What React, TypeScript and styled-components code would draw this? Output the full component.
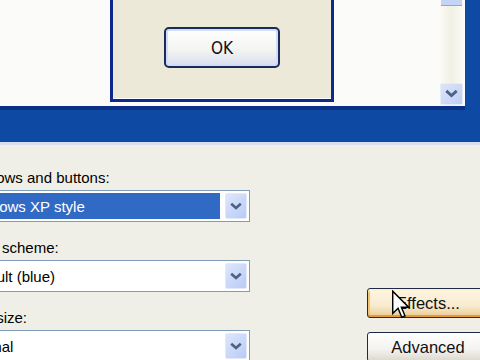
import React from 'react'
import styled, { createGlobalStyle, css } from 'styled-components'

const GlobalStyle = createGlobalStyle`
	html, body {
		margin: 0;
		padding: 0;
		background: #F0EFE7;
	}
`

const StyledPage = styled('div')`
	position: relative;
	display: flex;
	flex-direction: column;
	width: 480px;
	height: 360px;
	overflow: hidden;
	background: #F0EFE7;
	font-family: "Liberation Sans", Arial, sans-serif;
	color: #000;
`

// blue window frame around the preview
const StyledPreviewFrame = styled('div')`
	box-sizing: border-box;
	height: 145px;
	padding: 0 15px 0 0;
	background: #0E49A3;
	border-bottom: 3px solid #D7E0EE;
	flex-shrink: 0;
`

const StyledPreview = styled('div')`
	box-sizing: border-box;
	display: flex;
	height: 110px;
	padding: 0 2px 0 110px;
	background: #FBFBFA;
	border-bottom: 4px solid #0A2F86;
`

const StyledMessageBox = styled('div')`
	box-sizing: border-box;
	display: flex;
	justify-content: center;
	align-items: flex-start;
	width: 224px;
	height: 105px;
	margin-top: -3px;
	margin-right: auto;
	padding-top: 27px;
	background: #ECE9D8;
	border: 3px solid #0B2A8C;
	box-shadow: inset 0 -1px 0 #FFFFFF;
`

const StyledOkButton = styled('button')`
	box-sizing: border-box;
	width: 116px;
	height: 41px;
	border: 2px solid #1C2A5A;
	border-radius: 5px;
	background: linear-gradient(#FFFFFF 0%, #F4F4F1 55%, #D9DEF0 100%);
	box-shadow: inset 0 0 0 2px #D2DDF8;
	font-family: "DejaVu Sans Condensed", "Liberation Sans", sans-serif;
	font-size: 17px;
	color: #111;
	padding: 0;
`

const StyledScrollbar = styled('div')`
	display: flex;
	flex-direction: column;
	width: 23px;
	padding-bottom: 1px;
	background: linear-gradient(to right, #FBFAF6, #F1F0E4 50%, #FBFAF6);
`

const StyledThumb = styled('div')`
	height: 5px;
	background: #C5D4F6;
	border-bottom: 1px solid #8FA6D6;
	margin: 0 1px auto 1px;
`

const StyledScrollButton = styled('div')`
	box-sizing: border-box;
	display: flex;
	align-items: center;
	justify-content: center;
	height: 22px;
	border: 1px solid #E6ECFA;
	border-radius: 2px;
	background: linear-gradient(135deg, #DCE5FA, #BFCEF3);
`

const StyledPanel = styled('div')`
	display: flex;
	margin-left: -38px;
	padding-top: 21px;
`

const StyledLeftCol = styled('div')`
	display: flex;
	flex-direction: column;
	width: 288px;
	flex-shrink: 0;
`

const StyledLabel = styled('div')`
	height: 24px;
	line-height: 24px;
	font-size: 15px;
	white-space: nowrap;
`

const StyledSelect = styled('div')`
	box-sizing: border-box;
	display: flex;
	gap: 5px;
	height: 32px;
	padding: 2px;
	margin-bottom: 14px;
	background: #FFFFFF;
	border: 1px solid #7F9DB9;
`

const StyledValue = styled('div')<{ $selected?: boolean }>`
	flex: 1;
	display: flex;
	align-items: center;
	font-size: 15px;
	white-space: nowrap;
	${(p) => p.$selected && css`
		background: #316AC5;
		color: #FFFFFF;
	`}
`

const StyledDropButton = styled('div')`
	box-sizing: border-box;
	display: flex;
	align-items: center;
	justify-content: center;
	width: 22px;
	border: 1px solid #E2E9FB;
	border-radius: 2px;
	background: linear-gradient(135deg, #DDE6FC, #B9CBF5);
`

const StyledRightCol = styled('div')`
	display: flex;
	flex-direction: column;
	gap: 14px;
	width: 122px;
	margin-left: 117px;
	padding-top: 122px;
	flex-shrink: 0;
`

const StyledButton = styled('button')<{ $hot?: boolean }>`
	box-sizing: border-box;
	height: 30px;
	padding: 0;
	border: 1px solid #1E2B47;
	border-radius: 3px;
	background: linear-gradient(#FFFFFF 0%, #F3F2EE 60%, #DCD8CD 100%);
	font-family: "Liberation Sans", Arial, sans-serif;
	font-size: 16.5px;
	color: #111;
	${(p) => p.$hot && css`
		background: linear-gradient(#FFF6E2 0%, #F7EBCF 60%, #EBCB91 100%);
		box-shadow: inset 0 2px 0 #FFF0CF, inset 0 -2px 0 #E59A35, inset 2px 0 0 #F5C46A, inset -2px 0 0 #F5C46A;
	`}
`

const StyledCursor = styled('svg')`
	position: absolute;
	left: 392px;
	top: 290px;
`

const Chevron = ({ size = 12 }: { size?: number }) => (
	<svg width={size} height={size * 0.7} viewBox="0 0 10 7">
		<path d="M1 1.5 L5 5 L9 1.5" fill="none" stroke="#4D6185" strokeWidth="2.2" />
	</svg>
)

const fields = [
	{ label: 'Windows and buttons:', value: 'Windows XP style', selected: true },
	{ label: 'Color scheme:', value: 'Default (blue)' },
	{ label: 'Font size:', value: 'Normal' },
]

export default function App() {
	return (
		<>
			<GlobalStyle />
			<StyledPage>
				<StyledPreviewFrame>
					<StyledPreview>
						<StyledMessageBox>
							<StyledOkButton>OK</StyledOkButton>
						</StyledMessageBox>
						<StyledScrollbar>
							<StyledThumb />
							<StyledScrollButton>
								<Chevron size={13} />
							</StyledScrollButton>
						</StyledScrollbar>
					</StyledPreview>
				</StyledPreviewFrame>
				<StyledPanel>
					<StyledLeftCol>
						{fields.map((f) => (
							<React.Fragment key={f.label}>
								<StyledLabel>{f.label}</StyledLabel>
								<StyledSelect>
									<StyledValue $selected={f.selected}>{f.value}</StyledValue>
									<StyledDropButton>
										<Chevron />
									</StyledDropButton>
								</StyledSelect>
							</React.Fragment>
						))}
					</StyledLeftCol>
					<StyledRightCol>
						<StyledButton $hot>Effects...</StyledButton>
						<StyledButton>Advanced</StyledButton>
					</StyledRightCol>
				</StyledPanel>
				<StyledCursor width="18" height="29" viewBox="0 0 12.5 19.5">
					<path d="M0.5 0.5 L0.5 16 L4.2 12.4 L6.8 18.6 L9 17.6 L6.5 11.6 L11.5 11.6 Z" fill="#FFFFFF" stroke="#000" strokeWidth="1" strokeLinejoin="miter" />
				</StyledCursor>
			</StyledPage>
		</>
	)
}
